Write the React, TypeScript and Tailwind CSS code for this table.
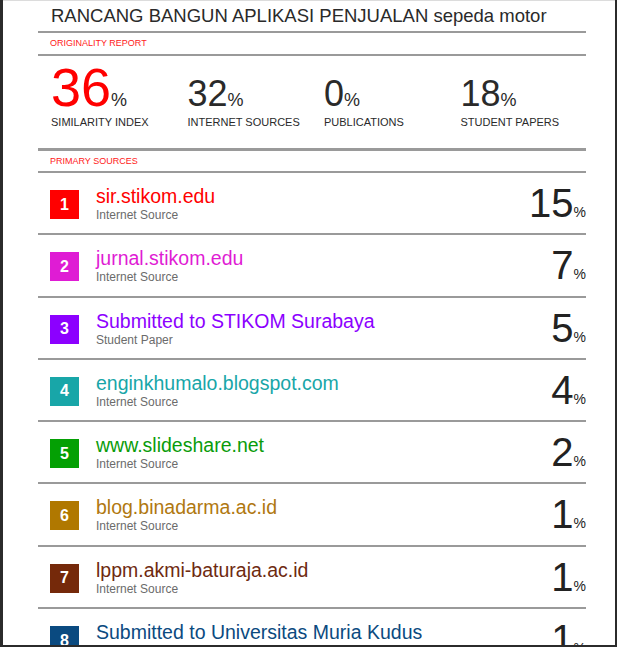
import React from "react";

type Source = {
  n: number;
  name: string;
  kind: string;
  pct: number;
  box: string;
  text: string;
};

const sources: Source[] = [
  { n: 1, name: "sir.stikom.edu", kind: "Internet Source", pct: 15, box: "bg-[#ff0000]", text: "text-[#ff0000]" },
  { n: 2, name: "jurnal.stikom.edu", kind: "Internet Source", pct: 7, box: "bg-[#df1cd4]", text: "text-[#df1cd4]" },
  { n: 3, name: "Submitted to STIKOM Surabaya", kind: "Student Paper", pct: 5, box: "bg-[#8c00ff]", text: "text-[#8c00ff]" },
  { n: 4, name: "enginkhumalo.blogspot.com", kind: "Internet Source", pct: 4, box: "bg-[#18a6a8]", text: "text-[#18a6a8]" },
  { n: 5, name: "www.slideshare.net", kind: "Internet Source", pct: 2, box: "bg-[#04a004]", text: "text-[#0a9c0a]" },
  { n: 6, name: "blog.binadarma.ac.id", kind: "Internet Source", pct: 1, box: "bg-[#b07800]", text: "text-[#b07810]" },
  { n: 7, name: "lppm.akmi-baturaja.ac.id", kind: "Internet Source", pct: 1, box: "bg-[#75290a]", text: "text-[#6e2a10]" },
  { n: 8, name: "Submitted to Universitas Muria Kudus", kind: "Student Paper", pct: 1, box: "bg-[#0a4a80]", text: "text-[#0b4a7f]" },
];

const stats = [
  { value: "36", label: "SIMILARITY INDEX", big: true },
  { value: "32", label: "INTERNET SOURCES", big: false },
  { value: "0", label: "PUBLICATIONS", big: false },
  { value: "18", label: "STUDENT PAPERS", big: false },
];

function SourceRow({ s }: { s: Source }) {
  return (
    <div className="flex h-[62.3px] shrink-0 items-start border-b-2 border-[#9a9a9a]">
      <div
        className={`${s.box} ml-[12px] mt-[17px] flex h-[29px] w-[29px] shrink-0 items-center justify-center text-[16px] font-bold text-white`}
      >
        {s.n}
      </div>
      <div className="ml-[17px] flex-1 pt-[12px]">
        <div className={`${s.text} text-[19.5px] leading-[23px]`}>{s.name}</div>
        <div className="text-[12px] leading-[14px] text-[#6b6b6b]">{s.kind}</div>
      </div>
      <div className="flex items-baseline pt-[10px] text-[#222]">
        <span className="text-[40px] leading-[40px]">{s.pct}</span>
        <span className="text-[14px]">%</span>
      </div>
    </div>
  );
}

export default function App() {
  return (
    <div
      className="h-[647px] w-[617px] overflow-hidden border-b-2 border-l-[3px] border-r-2 border-[#2b2b2b] bg-white"
      style={{ fontFamily: '"Liberation Sans", Arial, sans-serif' }}
    >
      <div className="h-px bg-[#dcdcdc]" />
      <div className="ml-[35px] w-[548px]">
        <div className="h-[32px] border-b-2 border-[#9a9a9a] pl-[13px] pt-[4px] text-[18.5px] leading-[22px] text-[#2a2a2a]">
          RANCANG BANGUN APLIKASI PENJUALAN sepeda motor
        </div>

        <div className="h-[23px] border-b-2 border-[#9a9a9a] pl-[12px] pt-[5px] text-[9px] leading-[11px] text-[#ff2020]">
          ORIGINALITY REPORT
        </div>

        <div className="flex items-baseline pl-[13px] pt-[4px] text-[#2a2a2a]">
          {stats.map((st) => (
            <div key={st.label} className="flex w-[136.5px] shrink-0 items-baseline">
              <span
                className={
                  st.big
                    ? "text-[54px] leading-[54px] text-[#ff0000]"
                    : "text-[36px] leading-[36px]"
                }
              >
                {st.value}
              </span>
              <span className="text-[18px]">%</span>
            </div>
          ))}
        </div>
        <div className="flex h-[37px] border-b-[3px] border-[#9a9a9a] pl-[13px] pt-[2px] text-[11px] leading-[13px] text-[#2a2a2a]">
          {stats.map((st) => (
            <div key={st.label} className="w-[136.5px] shrink-0">
              {st.label}
            </div>
          ))}
        </div>

        <div className="h-[22px] border-b-2 border-[#9a9a9a] pl-[12px] pt-[5px] text-[9px] leading-[11px] text-[#ff2020]">
          PRIMARY SOURCES
        </div>

        {sources.map((s) => (
          <SourceRow key={s.n} s={s} />
        ))}
      </div>
    </div>
  );
}
